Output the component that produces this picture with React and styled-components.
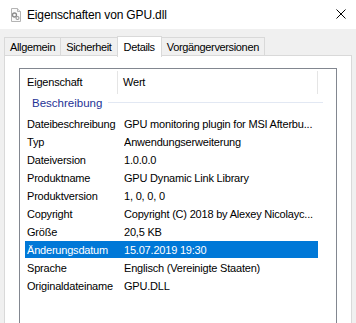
import React from "react";
import styled, { createGlobalStyle } from "styled-components";

const Global = createGlobalStyle`
  html, body { margin: 0; padding: 0; background: #f0f0f0; }
  body { font-family: "Liberation Sans", Arial, sans-serif; }
`;

const Window = styled.div`
  width: 356px;
  height: 323px;
  overflow: hidden;
  background: #f0f0f0;
  display: flex;
  flex-direction: column;
`;

const TitleBar = styled.div`
  height: 29px;
  flex: none;
  background: #ffffff;
  display: flex;
  align-items: center;
  padding-left: 8px;
  gap: 3px;
  font-size: 12px;
  color: #000;
  letter-spacing: -0.15px;
`;

const TitleText = styled.span`
  flex: 1;
  padding-top: 1px;
`;

const CloseBtn = styled.div`
  width: 30px;
  height: 29px;
  display: flex;
  align-items: center;
  justify-content: center;
  padding-bottom: 2px;
  box-sizing: border-box;
`;

const Body = styled.div`
  flex: 1;
  padding: 7px 4px 0 4px;
  display: flex;
  flex-direction: column;
`;

const TabStrip = styled.div`
  display: flex;
  align-items: flex-end;
  height: 20px;
  position: relative;
  z-index: 1;
`;

const Tab = styled.div`
  height: ${(p) => (p.$active ? "21px" : "19px")};
  box-sizing: border-box;
  padding: 0 ${(p) => (p.$active ? "6px" : "5px")};
  margin-left: ${(p) => (p.$first ? "0" : "-1px")};
  margin-bottom: ${(p) => (p.$active ? "-1px" : "0")};
  border: 1px solid #d9d9d9;
  border-bottom: ${(p) => (p.$active ? "none" : "1px solid #d9d9d9")};
  background: ${(p) => (p.$active ? "#ffffff" : "#f0f0f0")};
  font-size: 11px;
  letter-spacing: -0.35px;
  display: flex;
  align-items: center;
  padding-top: ${(p) => (p.$active ? "0" : "1px")};
  color: #000;
`;

const Panel = styled.div`
  flex: 1;
  background: #fff;
  border: 1px solid #d9d9d9;
  border-bottom: none;
  padding: 12px 14px 0 14px;
  margin-top: -1px;
`;

const ListBox = styled.div`
  border: 1px solid #828790;
  height: 300px;
  font-size: 11px;
  letter-spacing: -0.2px;
  color: #000;
`;

const HeaderRow = styled.div`
  display: flex;
  height: 26px;
  align-items: stretch;
`;

const HeaderCell = styled.div`
  width: ${(p) => p.$w}px;
  flex: none;
  box-sizing: border-box;
  padding-left: ${(p) => p.$pad}px;
  display: flex;
  align-items: center;
  position: relative;
  &::after {
    content: "";
    position: absolute;
    right: 0;
    top: 2px;
    bottom: 1px;
    width: 1px;
    background: ${(p) => (p.$sep ? "#e5e5e5" : "transparent")};
  }
`;

const GroupRow = styled.div`
  display: flex;
  align-items: center;
  height: 16px;
  margin-bottom: 4px;
  padding-left: 12px;
  color: #1e3296;
  font-size: 11.5px;
  letter-spacing: 0;
`;

const GroupLine = styled.div`
  height: 1px;
  background: #e2e8f3;
  width: 215px;
  margin-left: 6px;
  margin-top: -1px;
`;

const Row = styled.div`
  display: flex;
  align-items: center;
  height: 17px;
  margin: 0 0 1px 5px;
  width: 293px;
  background: ${(p) => (p.$sel ? "#0078d7" : "transparent")};
  color: ${(p) => (p.$sel ? "#ffffff" : "#000000")};
  white-space: nowrap;
`;

const PropCell = styled.div`
  width: 99px;
  flex: none;
  padding-left: 2px;
  box-sizing: border-box;
  overflow: hidden;
`;

const ValueCell = styled.div`
  flex: 1;
  overflow: hidden;
  padding-right: 4px;
`;

const FileIcon = () => (
  <svg width="16" height="16" viewBox="0 0 16 16">
    <path d="M3.5 1.5h6l3 3v10h-9z" fill="#fafafa" stroke="#b4b4b4" />
    <path d="M9.5 1.5v3h3" fill="#e8e8e8" stroke="#b4b4b4" />
    <circle cx="6.5" cy="8" r="2" fill="none" stroke="#8a8a8a" strokeWidth="1.3" />
    <circle cx="9.5" cy="11" r="1.5" fill="none" stroke="#9a9a9a" strokeWidth="1.1" />
  </svg>
);

const CloseIcon = () => (
  <svg width="10" height="10" viewBox="0 0 10 10">
    <path d="M0.5 0.5L9.5 9.5M9.5 0.5L0.5 9.5" stroke="#000" strokeWidth="1" />
  </svg>
);

const rows = [
  ["Dateibeschreibung", "GPU monitoring plugin for MSI Afterbu..."],
  ["Typ", "Anwendungserweiterung"],
  ["Dateiversion", "1.0.0.0"],
  ["Produktname", "GPU Dynamic Link Library"],
  ["Produktversion", "1, 0, 0, 0"],
  ["Copyright", "Copyright (C) 2018 by Alexey Nicolayc..."],
  ["Größe", "20,5 KB"],
  ["Änderungsdatum", "15.07.2019 19:30", true],
  ["Sprache", "Englisch (Vereinigte Staaten)"],
  ["Originaldateiname", "GPU.DLL"],
];

const tabs = ["Allgemein", "Sicherheit", "Details", "Vorgängerversionen"];

export default function App() {
  return (
    <>
      <Global />
      <Window>
        <TitleBar>
          <FileIcon />
          <TitleText>Eigenschaften von GPU.dll</TitleText>
          <CloseBtn>
            <CloseIcon />
          </CloseBtn>
        </TitleBar>
        <Body>
          <TabStrip>
            {tabs.map((t, i) => (
              <Tab key={t} $first={i === 0} $active={t === "Details"}>
                {t}
              </Tab>
            ))}
          </TabStrip>
          <Panel>
            <ListBox>
              <HeaderRow>
                <HeaderCell $w={98} $pad={7} $sep>
                  Eigenschaft
                </HeaderCell>
                <HeaderCell $w={200} $pad={5} $sep>
                  Wert
                </HeaderCell>
              </HeaderRow>
              <GroupRow>
                Beschreibung
                <GroupLine />
              </GroupRow>
              {rows.map(([k, v, sel]) => (
                <Row key={k} $sel={sel}>
                  <PropCell>{k}</PropCell>
                  <ValueCell>{v}</ValueCell>
                </Row>
              ))}
            </ListBox>
          </Panel>
        </Body>
      </Window>
    </>
  );
}
